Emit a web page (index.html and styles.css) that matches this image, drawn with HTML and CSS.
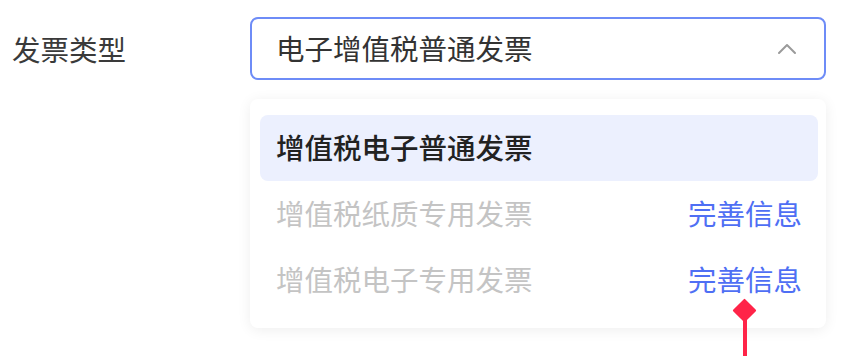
FILE: index.html
```html
<!DOCTYPE html>
<html lang="zh-CN">
<head>
<meta charset="utf-8">
<title>发票类型</title>
<link rel="stylesheet" href="styles.css">
</head>
<body>
<div class="form-row">
  <div class="label">发票类型</div>
  <div class="field">
    <div class="select">
      <span class="select-value">电子增值税普通发票</span>
      <svg class="chevron" width="20" height="12" viewBox="0 0 20 12"><path d="M2 10 L10 2 L18 10" fill="none" stroke="#9a9a9a" stroke-width="2" stroke-linecap="round" stroke-linejoin="round"/></svg>
    </div>
    <div class="dropdown">
      <div class="option active"><span>增值税电子普通发票</span></div>
      <div class="option disabled"><span>增值税纸质专用发票</span><a class="complete">完善信息</a></div>
      <div class="option disabled"><span>增值税电子专用发票</span><a class="complete">完善信息</a></div>
    </div>
  </div>
</div>
<div class="marker">
  <div class="diamond"></div>
  <div class="stem"></div>
</div>
</body>
</html>
```

FILE: styles.css
```css
html, body {
  margin: 0;
  padding: 0;
  background: #ffffff;
  font-family: "Noto Sans CJK SC", "Noto Sans", sans-serif;
}
body {
  position: relative;
  width: 847px;
  height: 356px;
  overflow: hidden;
}
.form-row {
  display: flex;
  align-items: flex-start;
  padding: 17px 0 0 12px;
}
.label {
  width: 238px;
  height: 63px;
  line-height: 63px;
  font-size: 28.5px;
  color: #3a3a3a;
}
.field {
  width: 576px;
  display: flex;
  flex-direction: column;
  gap: 19px;
}
.select {
  box-sizing: border-box;
  height: 63px;
  border: 2px solid #6e8cf7;
  border-radius: 8px;
  display: flex;
  align-items: center;
  justify-content: space-between;
  padding: 0 27px 2px 24px;
  font-size: 28.5px;
  color: #333333;
}
.chevron {
  display: block;
  margin-top: 2px;
}
.dropdown {
  background: #ffffff;
  border-radius: 8px;
  box-shadow: 0 2px 14px rgba(0, 0, 0, 0.07);
  padding: 16px 8px 15px 10px;
  display: flex;
  flex-direction: column;
}
.option {
  box-sizing: border-box;
  height: 66px;
  display: flex;
  align-items: center;
  justify-content: space-between;
  padding: 0 16px 3px 16px;
  border-radius: 8px;
  font-size: 28.5px;
}
.option.active {
  background: #ecf0fe;
  color: #222222;
  font-weight: 500;
}
.option.disabled {
  color: #c4c4c4;
}
.complete {
  color: #4f6ff4;
}
.marker {
  position: absolute;
  left: 733px;
  top: 299px;
  width: 24px;
  height: 57px;
}
.diamond {
  position: absolute;
  left: 3px;
  top: 3px;
  width: 17px;
  height: 17px;
  background: #ff2448;
  transform: rotate(45deg);
  border-radius: 1px;
}
.stem {
  position: absolute;
  left: 10px;
  top: 14px;
  width: 4px;
  height: 43px;
  background: #ff2448;
}
```
